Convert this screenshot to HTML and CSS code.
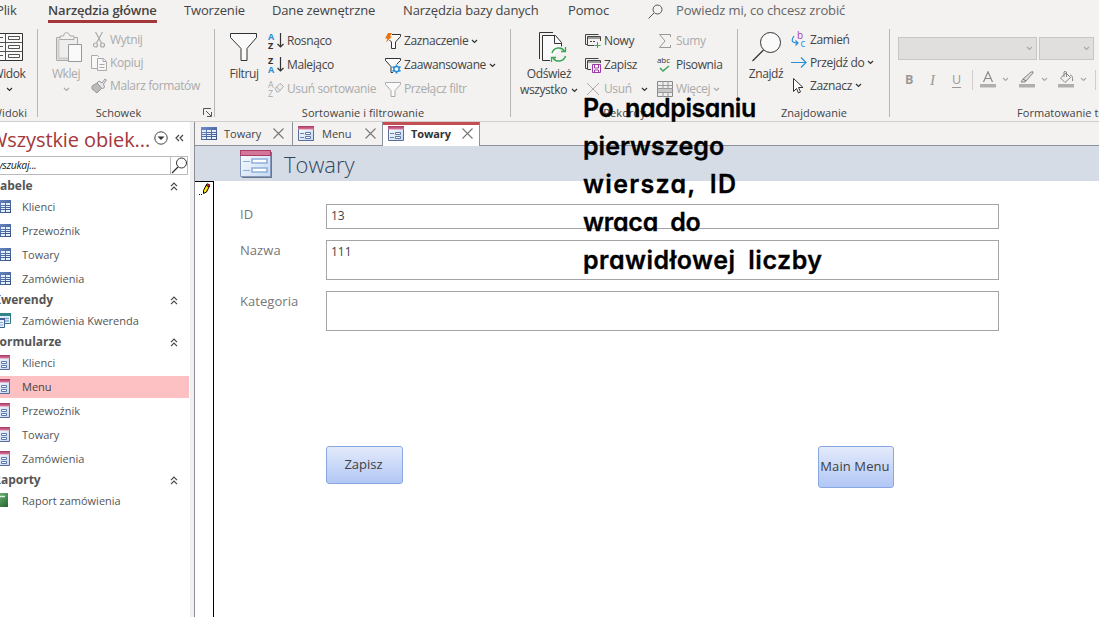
FILE: index.html
```
<!DOCTYPE html>
<html lang="pl">
<head>
<meta charset="utf-8">
<title>Towary</title>
<link rel="stylesheet" href="styles.css">
</head>
<body>
<svg class="defs" width="0" height="0">
  <defs>
    <linearGradient id="g-blue" x1="0" y1="0" x2="1" y2="1"><stop offset="0" stop-color="#6f8fce"/><stop offset="1" stop-color="#34507f"/></linearGradient>
    <linearGradient id="g-form" x1="0" y1="0" x2="1" y2="1"><stop offset="0" stop-color="#fff"/><stop offset="1" stop-color="#c5d8f3"/></linearGradient>
    <linearGradient id="g-red" x1="0" y1="0" x2="0" y2="1"><stop offset="0" stop-color="#a83463"/><stop offset="1" stop-color="#dc7f9f"/></linearGradient>
    <linearGradient id="g-green" x1="0" y1="0" x2="1" y2="1"><stop offset="0" stop-color="#82c68a"/><stop offset="1" stop-color="#23652c"/></linearGradient>
  </defs>
  <symbol id="chev" viewBox="0 0 7 5"><path d="M1 1l2.5 2.5L6 1" fill="none" stroke="currentColor" stroke-width="1.2"/></symbol>
  <symbol id="up" viewBox="0 0 8 9"><path d="M1 4.2l3-3 3 3M1 8.2l3-3 3 3" fill="none" stroke="#444" stroke-width="1.2"/></symbol>
  <symbol id="close" viewBox="0 0 11 11"><path d="M.5.5l10 10M10.5.5l-10 10" fill="none" stroke="#777" stroke-width="1.1"/></symbol>
  <symbol id="funnel" viewBox="0 0 16 17"><path d="M.5 1.5h15v2L10 9.5v6H6v-6L.5 3.500z" fill="#fafafa" stroke="currentColor"/></symbol>
  <symbol id="table" viewBox="0 0 16 13"><path d="M0 0h16v13H0z" fill="url(#g-blue)"/><path d="M1 3h4v2H1zM6 3h4v2H6zM11 3h4v2h-4zM1 6h4v1H1zM6 6h4v1H6zM11 6h4v1h-4zM1 8h4v1H1zM6 8h4v1H6zM11 8h4v1h-4zM1 10h4v2H1zM6 10h4v2H6zM11 10h4v2h-4z" fill="#e6effb"/></symbol>
  <symbol id="form" viewBox="0 0 16 15"><path d="M.5.500h15v14H.5z" fill="url(#g-form)" stroke="#5a6c98"/><path d="M0 0h16v3.500H0z" fill="url(#g-red)"/><path d="M2 7.500h4M2 11.500h4" stroke="#6a83b4"/><path d="M7.500 6.500h5v2h-5zM7.500 10.500h5v2h-5z" fill="#fff" stroke="#5f78ab"/></symbol>
  <symbol id="form-big" viewBox="0 0 32 28"><path d="M2 2h30v26H2z" fill="#6b7588"/><path d="M.5.500h30v26H.5z" fill="url(#g-form)" stroke="#879ac0"/><path d="M0 0h31v6H0z" fill="#a93d66"/><path d="M1 1h29v4H1z" fill="#d2779a"/><path d="M3 11.500h7M3 20.500h7" stroke="#8eafdb"/><path d="M12 9h15v4h-15zM12 18h15v4h-15z" fill="#fff" stroke="#8eafdb" stroke-width="1.600"/></symbol>
</svg>

<header class="ribbon">
  <nav class="menu">
    <span class="m-file">Plik</span><span class="m-home">Narzędzia główne</span><span class="m-create">Tworzenie</span><span class="m-ext">Dane zewnętrzne</span><span class="m-db">Narzędzia bazy danych</span><span class="m-help">Pomoc</span>
    <svg width="16" height="16" viewBox="0 0 16 16"><circle cx="9.500" cy="5.500" r="4.500" fill="none" stroke="#555"/><path d="M6 9L.5 14.500" stroke="#555"/></svg>
    <span class="m-tell">Powiedz mi, co chcesz zrobić</span>
  </nav>
  <div class="groups">
    <section class="group g-view">
      <div class="body"><div class="big">
        <svg width="28" height="30" viewBox="0 0 28 30"><path d="M.5 1.500h26v27H.5z" fill="#fafafa" stroke="#333"/><path d="M.5 10.500h26M.5 19.500h26M9.500 1.500v27M2 5.500h5M2 14.500h5M2 23.500h5" stroke="#555"/><path d="M12.500 4.500h11v3h-11zM12.500 13.500h11v3h-11zM12.500 22.500h11v3h-11z" fill="#fff" stroke="#555"/></svg>
        <span>Widok</span><svg class="chev drop"><use href="#chev"/></svg></div></div>
      <h2>Widoki</h2>
    </section>
    <section class="group g-clip off">
      <div class="body"><div class="big">
        <svg width="28" height="31" viewBox="0 0 28 31"><path d="M1.500 5.500h21v23h-21z" fill="#eee" stroke="#aaa"/><path d="M3.500 7v19.500H14" fill="none" stroke="#ccc" stroke-width="2"/><path d="M5 7.500V4h3.500q.5-3.500 3-3.500T15 4h4v3.500z" fill="#f3f2f1" stroke="#aaa"/><path d="M13.500 12.500h13v17h-13z" fill="#fafafa" stroke="#999"/></svg>
        <span>Wklej</span><svg class="chev drop"><use href="#chev"/></svg></div>
        <div class="col tight">
          <div class="row"><svg width="16" height="16" viewBox="0 0 16 16" fill="none" stroke="#aaa" stroke-width="1.200"><path d="M4.500 0l6 11M11.500 0l-6 11"/><circle cx="4.500" cy="13" r="2"/><circle cx="11.500" cy="13" r="2"/></svg><span>Wytnij</span></div>
          <div class="row"><svg width="16" height="16" viewBox="0 0 16 16" fill="#f7f7f7" stroke="#aaa"><path d="M6 13.500H.5V.500h6L8 2"/><path d="M6.500 3.500h6l3 3v9h-9z"/><path d="M12 3.500v3h3M8.500 9.500h5M8.500 12.500h5" /></svg><span>Kopiuj</span></div>
          <div class="row"><svg width="16" height="16" viewBox="0 0 16 16"><path d="M1 8l5-3 5 5-5 5-5-4z" fill="#bbb" stroke="#999"/><path d="M6 5l2-2 3 2 3-4 1.500 1-3 4 1 3-2 2z" fill="#e8e8e8" stroke="#999"/></svg><span>Malarz formatów</span></div>
        </div></div>
      <h2>Schowek</h2>
      <svg class="launcher" width="9" height="9" viewBox="0 0 9 9"><path d="M.5 7V.500H8M3 3l5 5M8.500 4v4.500H4" fill="none" stroke="#555"/></svg>
    </section>
    <section class="group g-sort">
      <div class="body"><div class="big">
        <svg width="28" height="30" viewBox="0 0 28 30"><path d="M.5 1.500h26v4L17 16.500v12h-6v-12L.5 5.500z" fill="#fafafa" stroke="#333"/></svg><span>Filtruj</span></div>
        <div class="col c1">
          <div class="row"><svg width="16" height="18" viewBox="0 0 16 18"><text x="0" y="8" class="az b">A</text><text x="0" y="17" class="az">Z</text><path d="M12.500 1v14M9.500 12l3 3 3-3" fill="none" stroke="#333" stroke-width="1.200"/></svg><span>Rosnąco</span></div>
          <div class="row"><svg width="16" height="18" viewBox="0 0 16 18"><text x="0" y="8" class="az">Z</text><text x="0" y="17" class="az b">A</text><path d="M12.500 1v14M9.500 12l3 3 3-3" fill="none" stroke="#333" stroke-width="1.200"/></svg><span>Malejąco</span></div>
          <div class="row off"><svg width="16" height="18" viewBox="0 0 16 18"><text x="0" y="8" class="az o">A</text><text x="0" y="17" class="az o">Z</text><path d="M7 8.500l5-5 3.500 3-5 5.500H9z" fill="#eee" stroke="#aaa"/><path d="M8.500 7l3.500 3.500" stroke="#aaa"/></svg><span>Usuń sortowanie</span></div>
        </div>
        <div class="col c2">
          <div class="row"><svg width="16" height="17" viewBox="0 0 16 17"><path d="M7 1.500h8.500v2L10.500 9v6.500h-4V9L4.500 7" fill="#fafafa" stroke="#333"/><path d="M3 0h4L5 3.500h2L1 9.500l1.500-4H0z" fill="#e8740c"/></svg><span>Zaznaczenie</span><svg class="chev"><use href="#chev"/></svg></div>
          <div class="row"><svg width="16" height="17" viewBox="0 0 16 17"><path d="M8 15.500H6v-6L.5 3.500v-2h15v2L12 7" fill="#fafafa" stroke="#333"/><circle cx="11.500" cy="12" r="2.600" fill="#fff" stroke="#2b8fd6" stroke-width="1.500"/><path d="M11.500 7.500v2M11.500 14.500v2M7.500 9.800l1.700 1M13.800 13.200l1.700 1M7.500 14.200l1.700-1M13.800 10.800l1.700-1" stroke="#2b8fd6" stroke-width="1.700"/></svg><span>Zaawansowane</span><svg class="chev"><use href="#chev"/></svg></div>
          <div class="row off"><svg width="16" height="17"><use href="#funnel"/></svg><span>Przełącz filtr</span></div>
        </div></div>
      <h2>Sortowanie i filtrowanie</h2>
    </section>
    <section class="group g-rec">
      <div class="body"><div class="big">
        <svg width="28" height="31" viewBox="0 0 28 31"><path d="M14 .500H.500V27" fill="none" stroke="#333"/><path d="M11 28.500H3.500v-25h13l6 7v4" fill="#fafafa" stroke="#333"/><path d="M15.500 4v7.500h7" fill="none" stroke="#333"/><path d="M13 21a7 7 0 0 1 12.500-2M26.500 24a7 7 0 0 1-12.500 2" fill="none" stroke="#3aa655" stroke-width="1.500"/><path d="M26.500 15v4.500H22M12.500 30v-4.500H17" fill="none" stroke="#3aa655" stroke-width="1.300"/></svg>
        <span>Odśwież</span><span class="line2">wszystko <svg class="chev"><use href="#chev"/></svg></span></div>
        <div class="col c1">
          <div class="row"><svg width="16" height="16" viewBox="0 0 16 16" fill="none" stroke="#444"><path d="M2 11.500H.500V1.500h13M9 12.500H2.500v-9h13V8M2.500 5h13" /><path d="M5 8.500h6" stroke-dasharray="2 1"/><path d="M12.500 9v6M9.500 12.500h6" stroke="#3aa655"/></svg><span>Nowy</span></div>
          <div class="row"><svg width="16" height="16" viewBox="0 0 16 16" fill="none" stroke="#444"><path d="M2 11.500H.500V1.500h13M6 12.500H2.500v-9h13V6M2.500 5h13"/><path d="M7.500 7.500h8v8h-8z" stroke="#9b3aa6" fill="#fff"/><path d="M9.500 8v3h4V8M9.500 15v-2h4v2" stroke="#9b3aa6"/></svg><span>Zapisz</span></div>
          <div class="row off"><svg width="16" height="16" viewBox="0 0 16 16"><path d="M2 2l12 12M14 2L2 14" stroke="#aaa"/></svg><span class="del">Usuń</span><svg class="chev dark"><use href="#chev"/></svg></div>
        </div>
        <div class="col c2">
          <div class="row off"><svg width="16" height="16" viewBox="0 0 16 16"><path d="M13.500 4V1.500h-11l5.500 6.500-5.500 6.500h11V12" fill="none" stroke="#999"/></svg><span>Sumy</span></div>
          <div class="row"><svg width="16" height="16" viewBox="0 0 16 16"><text x="0" y="6" class="abc">abc</text><path d="M3 11l3 3 6-5" fill="none" stroke="#3aa655" stroke-width="1.500"/></svg><span>Pisownia</span></div>
          <div class="row off"><svg width="16" height="16" viewBox="0 0 16 16"><path d="M.5.500h15v15H.5z" fill="#eee" stroke="#888"/><path d="M1 8h14v3H1z" fill="#c8c8c8"/><path d="M0 4.500h16M0 7.500h16M0 11.500h16M6 0v7M11 0v7M6 12v4M11 12v4" stroke="#999"/></svg><span>Więcej</span><svg class="chev"><use href="#chev"/></svg></div>
        </div></div>
      <h2>Rekordy</h2>
    </section>
    <section class="group g-find">
      <div class="body"><div class="big">
        <svg width="30" height="30" viewBox="0 0 30 30"><circle cx="18.500" cy="10.500" r="10" fill="#fafafa" stroke="#333"/><path d="M11.500 18L.5 29" stroke="#333" stroke-width="1.200"/></svg><span>Znajdź</span></div>
        <div class="col tight">
          <div class="row"><svg width="16" height="17" viewBox="0 0 16 17"><text x="6" y="8" class="bc p">b</text><text x="9.500" y="16" class="bc">c</text><path d="M3 5Q-2 12 7 12M4.500 9.500L7 12l-2.500 2.500" fill="none" stroke="#2b8fd6" stroke-width="1.200"/></svg><span>Zamień</span></div>
          <div class="row"><svg width="16" height="16" viewBox="0 0 16 16"><path d="M0 7.500h15M10 2.500l5 5-5 5" fill="none" stroke="#2b8fd6" stroke-width="1.200"/></svg><span>Przejdź do</span><svg class="chev"><use href="#chev"/></svg></div>
          <div class="row"><svg width="16" height="16" viewBox="0 0 16 16"><path d="M2.500.500v13l3-3 2 4.500 2-1-2-4.500h4.500z" fill="#fff" stroke="#333"/></svg><span>Zaznacz</span><svg class="chev"><use href="#chev"/></svg></div>
        </div></div>
      <h2>Znajdowanie</h2>
    </section>
    <section class="group g-fmt off">
      <div class="body">
        <div class="combos"><i><svg class="chev"><use href="#chev"/></svg></i><i><svg class="chev"><use href="#chev"/></svg></i></div>
        <div class="tools"><b>B</b><em>I</em><u>U</u>
          <span class="tool"><svg width="16" height="17" viewBox="0 0 16 17"><path d="M3.500 11L8 .800 12.500 11M5 7.500h6" fill="none" stroke="#888" stroke-width="1.200"/><path d="M0 13h16v3.500H0z" fill="#b1afae"/></svg><svg class="chev"><use href="#chev"/></svg></span>
          <span class="tool"><svg width="16" height="17" viewBox="0 0 16 17"><path d="M4 8l8-7q3-1 2 1L7 10zM4 8l-2 3h4l1-1z" fill="#ddd" stroke="#888"/><path d="M0 13h16v3.500H0z" fill="#b1afae"/></svg><svg class="chev"><use href="#chev"/></svg></span>
          <span class="tool last"><svg width="16" height="17" viewBox="0 0 16 17"><path d="M2.500 7L8 2l4.500 4.500L7 11.500zM6 6V1q1-1.500 2.500 0v5M12 4q3 0 2.500 6" fill="none" stroke="#888"/><path d="M0 13h16v3.500H0z" fill="#b1afae"/></svg><svg class="chev"><use href="#chev"/></svg></span>
        </div></div>
      <h2>Formatowanie tekstu</h2>
    </section>
  </div>
</header>

<div class="work">
  <aside class="nav">
    <div class="nav-head"><h1>Wszystkie obiek...</h1>
      <svg width="14" height="14" viewBox="0 0 14 14"><circle cx="7" cy="7" r="6.200" fill="none" stroke="#444"/><path d="M3.500 5.500h7L7 9z" fill="#333"/></svg>
      <svg class="fold" width="9" height="8" viewBox="0 0 9 8"><path d="M4 1L1 4l3 3M8 1L5 4l3 3" fill="none" stroke="#444" stroke-width="1.200"/></svg></div>
    <div class="search"><span>Wyszukaj...</span><svg width="17" height="17" viewBox="0 0 17 17"><circle cx="10.500" cy="6" r="5" fill="none" stroke="#333"/><path d="M7 10L1 16" stroke="#333" stroke-width="1.300"/></svg></div>
    <h3><span>Tabele</span><svg width="8" height="9"><use href="#up"/></svg></h3>
    <p><svg width="16" height="13"><use href="#table"/></svg>Klienci</p>
    <p><svg width="16" height="13"><use href="#table"/></svg>Przewoźnik</p>
    <p><svg width="16" height="13"><use href="#table"/></svg>Towary</p>
    <p><svg width="16" height="13"><use href="#table"/></svg>Zamówienia</p>
    <h3><span>Kwerendy</span><svg width="8" height="9"><use href="#up"/></svg></h3>
    <p><svg width="16" height="15" viewBox="0 0 16 15"><path d="M2.500.500h13v10h-13z" fill="#e6effb" stroke="#317b80"/><path d="M2 0h14v3H2z" fill="#318487"/><path d="M9 5.500h5M9 8h5" stroke="#8aa9d6" stroke-width="1.400"/><path d="M.5 5.500h9v9h-9z" fill="#e6effb" stroke="#405f93"/><path d="M0 5h10v2H0z" fill="#405f93"/><path d="M2 9.500h6M2 12h6" stroke="#8aa9d6"/></svg>Zamówienia Kwerenda</p>
    <h3><span>Formularze</span><svg width="8" height="9"><use href="#up"/></svg></h3>
    <p class="f"><svg width="16" height="15"><use href="#form"/></svg>Klienci</p>
    <p class="f sel"><svg width="16" height="15"><use href="#form"/></svg>Menu</p>
    <p class="f"><svg width="16" height="15"><use href="#form"/></svg>Przewoźnik</p>
    <p class="f"><svg width="16" height="15"><use href="#form"/></svg>Towary</p>
    <p class="f"><svg width="16" height="15"><use href="#form"/></svg>Zamówienia</p>
    <h3><span>Raporty</span><svg width="8" height="9"><use href="#up"/></svg></h3>
    <p class="r"><svg width="16" height="14" viewBox="0 0 16 14"><path d="M0 0h16v14H0z" fill="url(#g-green)"/><path d="M5 3.500h8" stroke="#dff3e0" stroke-width="1.500"/></svg>Raport zamówienia</p>
  </aside>
  <div class="splitter"></div>
  <main>
    <div class="tabs">
      <div class="tab t1"><svg width="16" height="13"><use href="#table"/></svg><span>Towary</span><svg width="11" height="11"><use href="#close"/></svg></div>
      <div class="tab t2"><svg width="16" height="15"><use href="#form"/></svg><span>Menu</span><svg width="11" height="11"><use href="#close"/></svg></div>
      <div class="tab t3"><svg width="16" height="15"><use href="#form"/></svg><span>Towary</span><svg width="11" height="11"><use href="#close"/></svg></div>
    </div>
    <div class="form-head"><svg width="32" height="28"><use href="#form-big"/></svg><h1>Towary</h1></div>
    <div class="record">
      <div class="gutter"><svg width="12" height="12" viewBox="0 0 12 12"><path d="M4.500 10.500v-3l3-6 3 1.500-3 6z" fill="#ffe600" stroke="#000"/><path d="M7.500 1.500l3 1.500" stroke="#000" stroke-width="3"/><path d="M8 1.800l2 1" stroke="#e22" stroke-width="1.800"/><path d="M0 11h1v1H0zM2 11h1v1H2z"/></svg></div>
      <div class="fields">
        <div class="field"><label>ID</label><div class="input one">13</div></div>
        <div class="field"><label>Nazwa</label><div class="input">111</div></div>
        <div class="field"><label>Kategoria</label><div class="input"></div></div>
        <div class="actions"><button>Zapisz</button><button class="mm">Main Menu</button></div>
      </div>
    </div>
  </main>
</div>
<div class="note"><div class="n1">Po nadpisaniu</div><div class="n2">pierwszego</div><div class="n3">wiersza, ID</div><div class="n4">wraca do</div><div class="n5">prawidłowej liczby</div></div>
</body>
</html>
```
FILE: styles.css
```
* { box-sizing: border-box; }
body { margin: 0; width: 1099px; height: 617px; overflow: hidden; background: #fff; color: #444; font: 12px/16px "Open Sans", "Noto Sans", sans-serif; white-space: nowrap; display: flex; flex-direction: column; }
svg { display: block; flex: none; }
h1, h2, h3, p { margin: 0; font-weight: 400; }
.defs { position: absolute; }
.chev { width: 7px; height: 5px; color: #333; }
.off .chev { color: #aaa; }
.off .chev.dark { color: #333; }

.ribbon { height: 122px; flex: none; background: #f3f2f1; border-bottom: 1px solid #d0cfce; }
.menu { display: flex; height: 24px; font-size: 13px; line-height: 21px; }
.menu span { flex: none; letter-spacing: -.15px; }
.menu svg { margin: 4px 12px 0 0; }
.menu .m-file { width: 52px; margin-left: -4px; }
.menu .m-home { width: 109px; font-weight: 600; height: 23px; border-bottom: 3px solid #a4373a; margin-right: 27px; }
.menu .m-create { width: 88px; }
.menu .m-ext { width: 131px; }
.menu .m-db { width: 165px; }
.menu .m-help { width: 80px; }
.menu .m-tell { color: #666; }

.groups { display: flex; height: 98px; }
.group { position: relative; flex: none; height: 98px; }
.group::after { content: ""; position: absolute; right: 0; top: 5px; width: 1px; height: 88px; background: #b8b6b4; }
.body { display: flex; height: 81px; padding-top: 8px; }
.group h2 { font-size: 11px; line-height: 16px; text-align: center; color: #444; letter-spacing: .05px; }
.big { display: flex; flex-direction: column; align-items: center; flex: none; }
.big > svg:first-child { margin-bottom: 3px; }
.big > svg:first-child[height="30"] { margin-bottom: 4px; }
.big span { letter-spacing: -.4px; line-height: 16px; }
.drop { margin-top: 5px; }
.off, .off .row, .row.off { color: #aaa; }
.col { display: flex; flex-direction: column; flex: none; }
.row { display: flex; align-items: center; height: 24px; letter-spacing: -.38px; }
.row > svg:first-child { margin-right: 3px; }
.row .chev { margin-left: 3px; }
.c1, .c2 { margin-top: -3px; }
.tight { margin-top: -4px; }
.tight .row { height: 23px; }

.g-view { width: 38px; }
.g-view .big { width: 40px; margin-left: -11px; }
.g-view .big > svg:first-child { margin-left: 2px; }
.g-view h2 { width: 36px; text-align: right; margin-left: -9px; }
.g-clip { width: 177px; }
.g-clip .big { width: 38px; margin: 0 6px 0 9px; }
.g-clip .big > svg:first-child { margin-left: 5px; }
.g-clip h2 { margin-left: -16px; }
.launcher { position: absolute; right: 3px; bottom: 5px; }
.g-sort { width: 296px; }
.g-sort .big { width: 32px; margin-left: 13px; margin-right: 8px; }
.g-sort .c1 { width: 117px; }
.g-rec { width: 227px; }
.g-rec .big { width: 58px; margin: 0 7px 0 9px; }
.g-rec .big > svg:first-child { margin-left: 7px; }
.g-rec .line2 { display: flex; align-items: center; gap: 4px; }
.g-rec .c1 { width: 72px; }
.g-rec .del { width: 34px; }
.g-find { width: 152px; }
.g-find .big { width: 36px; margin: 0 7px 0 10px; }
.g-find .big > svg:first-child { margin-left: 2px; }
.g-fmt { width: 220px; padding-left: 8px; }
.g-fmt .body { flex-direction: column; padding-top: 13px; }
.combos { display: flex; gap: 2px; }
.combos i { width: 139px; height: 23px; background: #e1dfdd; border: 1px solid #c8c6c4; display: flex; align-items: center; justify-content: flex-end; padding-right: 3px; }
.combos i + i { width: 55px; }
.tools { display: flex; align-items: center; height: 39px; color: #999; font-size: 12.5px; }
.tools b { width: 25px; padding-left: 7px; }
.tools em { width: 24px; padding-left: 7px; font-family: "Liberation Serif", serif; font-size: 15px; }
.tools u { width: 26px; padding-left: 5px; border-right: 1px solid #d0cecc; line-height: 20px; text-underline-offset: 3px; }
.tool { display: flex; align-items: center; gap: 6px; width: 39px; position: relative; left: 7px; }
.tool.last { width: 38px; border-right: 1px solid #d0cecc; height: 20px; }
.g-fmt h2 { text-align: left; margin-left: 119px; }
.az { font: 700 9px "Open Sans", sans-serif; fill: #333; }
.az.b { fill: #2b8fd6; }
.az.o { fill: #aaa; font-weight: 400; }
.abc { font: 8px "Open Sans", sans-serif; fill: #333; letter-spacing: -.1px; }
.bc { font: 10px "Open Sans", sans-serif; fill: #2b8fd6; }
.bc.p { fill: #a83bb8; }

.work { display: flex; flex: 1; min-height: 0; }
.nav { width: 190px; flex: none; background: #fff; color: #555; font-size: 11px; overflow: hidden; }
.nav-head { display: flex; align-items: center; height: 34px; padding-top: 1px; }
.nav-head h1 { font-size: 20px; line-height: 30px; color: #a4373a; margin-left: -11px; width: 165px; letter-spacing: -.1px; }
.nav-head .fold { margin-left: 7px; }
.nav-head svg { margin-top: -3px; }
.search { display: flex; width: 192px; margin-left: -4px; height: 19px; border: 1px solid #bbb; font-size: 10.5px; font-style: italic; color: #222; line-height: 17px; }
.search span { width: 171px; margin-left: -8px; letter-spacing: -.3px; flex: none; }
.search svg { border-left: 1px solid #bbb; width: 18px; margin-left: 10px; }
.nav h3 { height: 18px; display: flex; align-items: center; justify-content: space-between; padding-right: 12px; font-size: 12px; font-weight: 700; margin-left: -7px; letter-spacing: 0; }
.search + h3 { margin-top: 2px; }
.nav p { display: flex; align-items: center; height: 24px; width: 189px; }
.nav p svg { margin: -2px 11px 0 -5px; }
.nav p.f svg, .nav p.r svg { margin-left: -6px; margin-right: 12px; }
.nav p.r svg { margin-left: -8px; margin-right: 14px; }
.nav p.sel { height: 22px; margin: 1px 0; background: #fdc1c3; color: #444; }
.splitter { width: 5px; flex: none; background: #f0f0f0; border-right: 1px solid #8c9096; }
main { flex: 1; display: flex; flex-direction: column; }
.tabs { display: flex; height: 24px; background: #f3f2f1; border-bottom: 1px solid #8c929b; font-size: 11px; }
.tab { display: flex; align-items: center; height: 24px; width: 90px; padding-left: 5px; border-right: 1px solid #8c929b; border-bottom: 1px solid #8c929b; }
.tab span { width: 48px; margin-left: 8px; }
.t1 { width: 98px; padding-left: 6px; }
.t1 span { width: 49px; margin-left: 7px; }
.t2 span { width: 43px; }
.t3 { width: 97px; background: #fff; border-top: 3px solid #c34f52; border-bottom: 0; font-weight: 700; color: #333; padding-bottom: 4px; }
.t3 span { width: 51px; margin-left: 7px; letter-spacing: -.1px; }
.form-head { height: 35px; background: #d5dce6; display: flex; align-items: center; padding: 0 0 0 45px; }
.form-head h1 { font: 300 22px/32px "Open Sans", sans-serif; color: #33475f; margin: 1px 0 0 12px; }
.record { flex: 1; display: flex; }
.gutter { width: 19px; border-top: 1px solid #000; border-right: 1px solid #000; padding: 1px 0 0 4px; }
.fields { padding: 23px 0 0 26px; color: #777; font-size: 13px; }
.field { display: flex; margin-bottom: 11px; }
.field label { width: 86px; line-height: 21px; font-size: 13px; letter-spacing: .05px; }
.input { width: 673px; height: 40px; border: 1px solid #a5a5a5; padding-left: 4px; line-height: 22px; font-size: 12px; color: #444; }
.input.one { height: 25px; }
.actions { display: flex; justify-content: space-between; align-items: flex-start; width: 568px; margin: 115px 0 0 86px; }
button { width: 77px; height: 38px; padding: 0 2px 2px 0; border: 1px solid #8aa8e0; border-radius: 3px; background: linear-gradient(#e3eafb, #b2c7f5); color: #404040; font: 13px "Open Sans", sans-serif; }
button.mm { width: 76px; height: 42px; letter-spacing: .1px; }
.note { position: absolute; left: 583px; top: 89px; color: #000; font: 600 25px/38px "Comic Sans MS", Inter, sans-serif; font-feature-settings: "cv11"; -webkit-text-stroke: .3px #000; word-spacing: 6px; }
.n1 { letter-spacing: -.45px; }
.n3 { letter-spacing: 1.3px; }
.n4 { letter-spacing: -.2px; }
.n5 { letter-spacing: .5px; }
```
